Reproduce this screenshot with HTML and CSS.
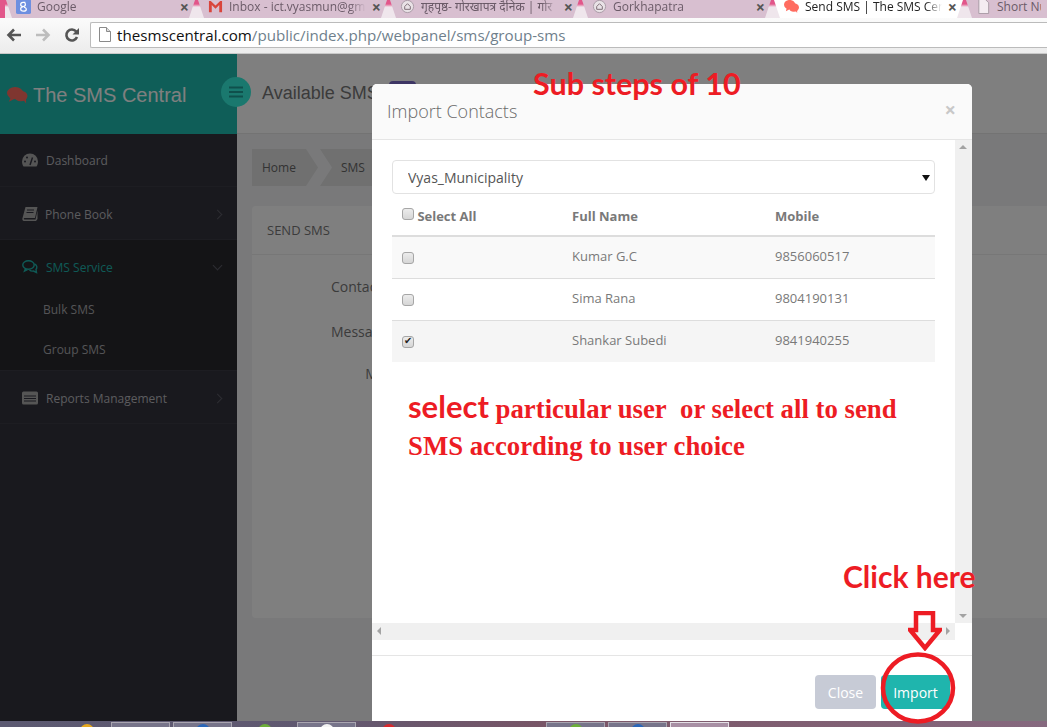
FILE: index.html
```html
<!DOCTYPE html>
<html lang="en">
<head>
    <meta charset="UTF-8">
    <title>Send SMS | The SMS Central</title>
    <link rel="stylesheet" href="styles.css">
</head>
<body>
    <!-- Browser tabs -->
    <div class="tab-strip">
        <div class="tab">
            <svg class="fav" viewBox="0 0 16 16"><rect width="16" height="16" rx="2" fill="#6d8fe0"/><path d="M10 3.500H7.500C6 3.500 5 4.600 5 5.800S6 8 7.500 8 10 7 10 5.800 9 3.500 9 3.500M7.500 8.500C6 8.500 5 9.600 5 10.700S6.200 13 8 13 11 11.900 11 10.800 9.500 9.300 8.500 8.500" fill="none" stroke="#fff" stroke-width="1.300"/></svg>
            <span class="tab-title">Google</span><span class="tab-x">×</span>
        </div>
        <div class="tab">
            <svg class="fav" viewBox="0 0 16 16"><path d="M1 14V2h2l5 5 5-5h2v12h-3V6.500L8 10.500 4 6.500V14z" fill="#d9453c"/></svg>
            <span class="tab-title">Inbox - ict.vyasmun@gma</span><span class="tab-x">×</span>
        </div>
        <div class="tab">
            <svg class="fav" viewBox="0 0 16 16"><circle cx="8" cy="8" r="6.500" fill="#e9e2e6" stroke="#a89aa4"/><path d="M5 11V8l3-3 3 3v3z" fill="none" stroke="#7a6a72"/></svg>
            <span class="tab-title">गृहपृष्ठ- गोरखापत्र दैनिक | गोर</span><span class="tab-x">×</span>
        </div>
        <div class="tab">
            <svg class="fav" viewBox="0 0 16 16"><circle cx="8" cy="8" r="6.500" fill="#e9e2e6" stroke="#a89aa4"/><path d="M5 11V8l3-3 3 3v3z" fill="none" stroke="#7a6a72"/></svg>
            <span class="tab-title">Gorkhapatra</span><span class="tab-x">×</span>
        </div>
        <div class="tab tab-active">
            <svg class="fav" viewBox="0 0 16 16"><ellipse cx="6" cy="6" rx="6" ry="5" fill="#ff6c60"/><ellipse cx="10.500" cy="9" rx="5.500" ry="4.500" fill="#ff6c60"/><path d="M3 9l-1 4 4-2zM12 12l2 3v-4z" fill="#ff6c60"/></svg>
            <span class="tab-title">Send SMS | The SMS Cent</span><span class="tab-x">×</span>
        </div>
        <div class="tab tab-last">
            <svg class="fav" viewBox="0 0 16 16"><path d="M3 .5h7l3.500 3.500v11.500H3z" fill="#f4ecf1" stroke="#a89aa4"/></svg>
            <span class="tab-title">Short Nu</span>
        </div>
    </div>

    <!-- Browser toolbar -->
    <div class="toolbar">
        <svg class="nav-icon" viewBox="0 0 18 18"><path d="M16 9H4M9 3.500 3.500 9 9 14.500" fill="none" stroke="#555" stroke-width="2.600"/></svg>
        <svg class="nav-icon" viewBox="0 0 18 18"><path d="M2 9h12M9 3.500 14.500 9 9 14.500" fill="none" stroke="#bdbdbd" stroke-width="2.600"/></svg>
        <svg class="nav-icon" viewBox="0 0 18 18"><path d="M14 11a5.500 5.500 0 1 1-.8-5.500" fill="none" stroke="#555" stroke-width="2.600"/><path d="M16 2v6.500H9.500z" fill="#555"/></svg>
        <div class="omnibox">
            <svg class="page-icon" viewBox="0 0 12 15"><path d="M.5.500h7l4 4v10H.5z" fill="#fff" stroke="#8a8a8a"/><path d="M7.500.500v4h4" fill="#ddd" stroke="#8a8a8a"/></svg>
            <span class="url-host">thesmscentral.com</span><span class="url-path">/public/index.php/webpanel/sms/group-sms</span>
        </div>
    </div>

    <!-- The page itself -->
    <div class="app">
        <aside class="sidebar">
            <div class="brand">
                <svg class="brand-icon" viewBox="0 0 22 18"><ellipse cx="8.500" cy="7" rx="8.500" ry="6.500" fill="#ff6c60"/><ellipse cx="14.500" cy="10" rx="7" ry="5.500" fill="#ff6c60"/><path d="M4 11l-2 5 6-3zM17 14l3 4v-6z" fill="#ff6c60"/></svg>
                <span>The SMS Central</span>
            </div>
            <nav>
                <div class="menu-item">
                    <svg class="menu-icon" viewBox="0 0 16 13"><path d="M8 0a8 8 0 0 0-8 8c0 2 .6 3.600 1.500 5h13c.9-1.400 1.500-3 1.500-5a8 8 0 0 0-8-8z" fill="#aaa"/><path d="M8 11.500 10.500 4" stroke="#323240" stroke-width="1.400"/><circle cx="3" cy="8" r="1" fill="#323240"/><circle cx="5" cy="4" r="1" fill="#323240"/><circle cx="13" cy="8" r="1" fill="#323240"/></svg>
                    <span class="menu-label">Dashboard</span>
                </div>
                <div class="menu-item">
                    <svg class="menu-icon" viewBox="0 0 16 14"><path d="M3.500 0H15.500L13 11H2.500C1.500 11 1.500 12.500 2.500 12.500H13.500L15.500 3.500V12L14 14H2C.5 14 0 12.500 .5 11z" fill="#aaa"/><path d="M5 3h7M4.500 5.500h7" stroke="#323240"/></svg>
                    <span class="menu-label menu-label-tight">Phone Book</span>
                    <i class="chev"></i>
                </div>
                <div class="menu-group">
                    <div class="menu-item menu-active">
                        <svg class="menu-icon" viewBox="0 0 16 14"><ellipse cx="6.500" cy="5" rx="5.700" ry="4.200" fill="none" stroke="#1fb5ad" stroke-width="1.400"/><path d="M3.500 8.500 2.500 11l3-1.500M12.500 4c2.500 1 3 3.500 1.500 5.500l.5 3-3-1.500c-1.500.3-3 0-4-1" fill="none" stroke="#1fb5ad" stroke-width="1.400"/></svg>
                        <span class="menu-label">SMS Service</span>
                        <i class="chev chev-down"></i>
                    </div>
                    <div class="sub-item">Bulk SMS</div>
                    <div class="sub-item">Group SMS</div>
                </div>
                <div class="menu-item">
                    <svg class="menu-icon" viewBox="0 0 16 13"><rect width="16" height="13" rx="1.500" fill="#aaa"/><path d="M2 4.500h12M2 7h12M2 9.500h12" stroke="#323240"/></svg>
                    <span class="menu-label">Reports Management</span>
                    <i class="chev"></i>
                </div>
            </nav>
        </aside>

        <main class="main">
            <header class="topbar">
                <span class="topbar-title">Available SMS</span>
                <span class="sms-badge">10</span>
            </header>
            <div class="content">
                <div class="crumbs">
                    <span class="crumb crumb-first">Home</span>
                    <span class="crumb crumb-next">SMS</span>
                </div>
                <section class="card">
                    <div class="card-title">SEND SMS</div>
                    <div class="form-row form-row-1"><label>Contacts</label></div>
                    <div class="form-row form-row-2"><label>Message</label></div>
                    <div class="form-row form-row-3"><label>Msg</label></div>
                </section>
            </div>
        </main>

        <button class="nav-toggle">
            <svg viewBox="0 0 14 12"><path d="M0 1.500h14M0 6h14M0 10.500h14" stroke="#1fa098" stroke-width="2"/></svg>
        </button>

        <div class="backdrop"></div>

        <!-- Import contacts dialog -->
        <div class="modal">
            <div class="modal-head">
                <h4>Import Contacts</h4>
                <span class="modal-close">×</span>
            </div>
            <div class="modal-scroll">
                <div class="modal-view">
                    <div class="modal-body">
                        <div class="select-wrap">
                            <select class="group-select">
                                <option>Vyas_Municipality</option>
                            </select>
                        </div>
                        <table class="contacts">
                            <thead>
                                <tr>
                                    <th class="col-check"><input type="checkbox" class="chk chk-head"> Select All</th>
                                    <th class="col-name">Full Name</th>
                                    <th>Mobile</th>
                                </tr>
                            </thead>
                            <tbody>
                                <tr class="row-odd">
                                    <td><input type="checkbox" class="chk"></td>
                                    <td>Kumar G.C</td>
                                    <td>9856060517</td>
                                </tr>
                                <tr>
                                    <td><input type="checkbox" class="chk"></td>
                                    <td>Sima Rana</td>
                                    <td>9804190131</td>
                                </tr>
                                <tr class="row-picked">
                                    <td><input type="checkbox" class="chk" checked></td>
                                    <td>Shankar Subedi</td>
                                    <td>9841940255</td>
                                </tr>
                            </tbody>
                        </table>
                        <p class="note"><span class="note-lead">select</span> particular user&nbsp; or select all to send<br>SMS according to user choice</p>
                    </div>
                    <div class="vbar"><i class="arrow arrow-up"></i><i class="arrow arrow-down"></i></div>
                </div>
                <div class="hbar"><i class="arrow arrow-left"></i><i class="arrow arrow-right"></i></div>
            </div>
            <div class="modal-foot">
                <button class="btn btn-close">Close</button>
                <button class="btn btn-import">Import</button>
            </div>
        </div>

        <!-- Red marks drawn over the screenshot -->
        <div class="mark mark-steps">Sub steps of 10</div>
        <div class="mark mark-click">Click here</div>
        <svg class="mark mark-arrow" viewBox="0 0 34 40"><path d="M8 2h17v17h7L17 37 2 19h6z" fill="none" stroke="#ed1c24" stroke-width="4.500"/></svg>
        <svg class="mark mark-ring" viewBox="0 0 76 72"><ellipse cx="38" cy="36" rx="35" ry="33.500" fill="none" stroke="#ed1c24" stroke-width="4.500"/></svg>
    </div>

    <!-- Windows taskbar -->
    <div class="taskbar">
        <span class="task task-bare"><i class="peek peek-orange"></i></span>
        <span class="task"><i class="peek peek-none"></i></span>
        <span class="task"><i class="peek peek-blue"></i></span>
        <span class="task task-bare"><i class="peek peek-green"></i></span>
        <span class="task"><i class="peek peek-white"></i></span>
        <span class="task task-bare"><i class="peek peek-red"></i></span>
        <span class="task task-gap"><i class="peek peek-green"></i></span>
        <span class="task"><i class="peek peek-blue"></i></span>
        <span class="task task-current"><i class="peek peek-none"></i></span>
    </div>
</body>
</html>
```

FILE: styles.css
```css
html, body {
    margin: 0;
    padding: 0;
    height: 727px;
    overflow: hidden;
}

body {
    display: flex;
    flex-direction: column;
    font-family: "Open Sans", sans-serif;
    background-color: #fff;
}

/* Browser tabs */
.tab-strip {
    display: flex;
    height: 18px;
    flex-shrink: 0;
    padding-left: 6px;
    overflow: hidden;
    background:
        linear-gradient(90deg, #e2568a 0, #e2568a 5px, transparent 5px),
        linear-gradient(#e2568a 0, #e2568a 4px, #efe6ec 7px);
}

.tab {
    display: flex;
    align-items: center;
    width: 189px;
    margin-right: 3px;
    padding: 0 6px 5px 10px;
    box-sizing: border-box;
    flex-shrink: 0;
    background-color: #d8bfd0;
    color: #6b5b68;
    font-size: 12px;
    clip-path: polygon(0 0, 100% 0, calc(100% - 6px) 100%, 6px 100%);
}

.tab-active {
    background-color: #fff;
    color: #222;
}

.tab-last {
    width: 81px;
    margin-right: 0;
    clip-path: polygon(0 0, 100% 0, 100% 100%, 6px 100%);
}

.fav {
    width: 15px;
    height: 15px;
    margin-right: 6px;
    flex-shrink: 0;
}

.tab-title {
    flex: 1;
    overflow: hidden;
    white-space: nowrap;
    font-family: "Open Sans", "Noto Sans", sans-serif;
    mask-image: linear-gradient(90deg, #000 88%, transparent);
}

.tab-last .tab-title {
    mask-image: none;
}

.tab-x {
    margin-left: 6px;
    color: #555;
    font-size: 16px;
    font-weight: 700;
    line-height: 14px;
}

/* Browser toolbar */
.toolbar {
    display: flex;
    align-items: center;
    height: 36px;
    flex-shrink: 0;
    box-sizing: border-box;
    padding: 0 0 2px 5px;
    background: linear-gradient(#fbfbfb, #ececec);
    border-bottom: 1px solid #c8c8c8;
}

.nav-icon {
    width: 18px;
    height: 18px;
    margin-right: 11px;
    flex-shrink: 0;
}

.omnibox {
    display: flex;
    align-items: center;
    flex: 1;
    height: 26px;
    box-sizing: border-box;
    margin-left: -2px;
    padding-left: 8px;
    border: 1px solid #bbb;
    border-right: none;
    border-radius: 2px 0 0 2px;
    background-color: #fff;
    font-size: 15.15px;
    white-space: nowrap;
}

.page-icon {
    width: 12px;
    height: 15px;
    margin-right: 6px;
}

.url-host {
    color: #111;
}

.url-path {
    color: #6f7f8c;
}

/* Page */
.app {
    position: relative;
    display: flex;
    flex: 1;
    min-height: 0;
    background-color: #f2f3f5;
}

.sidebar {
    width: 237px;
    flex-shrink: 0;
    background-color: #32323c;
}

.brand {
    display: flex;
    align-items: center;
    height: 80px;
    padding-left: 7px;
    padding-top: 2px;
    box-sizing: border-box;
    background-color: #1fbcb0;
    color: #fff;
    font-family: "Liberation Sans", sans-serif;
    font-size: 20px;
}

.brand-icon {
    width: 21px;
    height: 18px;
    margin-right: 5px;
}

.menu-item {
    display: flex;
    align-items: center;
    height: 53px;
    padding: 2px 14px 0 22px;
    box-sizing: border-box;
    border-bottom: 1px solid #3a3a44;
    color: #b8b8bc;
    font-size: 12px;
}

nav > .menu-item:first-child {
    padding-top: 0;
}

.menu-icon {
    width: 16px;
    height: 14px;
    margin-right: 8px;
    flex-shrink: 0;
}

.menu-label {
    flex: 1;
}

.menu-label-tight {
    margin-left: -1px;
}

.menu-active {
    padding-top: 1px;
    color: #1fb5ad;
    border-bottom: none;
}

.menu-group {
    height: 131px;
    box-sizing: border-box;
    border-bottom: 1px solid #3a3a44;
    background-color: #28282c;
}

.sub-item {
    height: 40px;
    line-height: 34px;
    padding-left: 43px;
    color: #a8a8ac;
    font-size: 12px;
}

.chev {
    width: 6px;
    height: 6px;
    margin-right: 2px;
    border-top: 1px solid #5a5a64;
    border-right: 1px solid #5a5a64;
    transform: rotate(45deg);
}

.chev-down {
    margin-top: -4px;
    transform: rotate(135deg);
}

.main {
    flex: 1;
    min-width: 0;
}

.topbar {
    display: flex;
    align-items: center;
    height: 80px;
    padding-left: 25px;
    box-sizing: border-box;
    background-color: #fff;
    border-bottom: 1px solid #e6e6e6;
}

.topbar-title {
    color: #777;
    font-family: "Liberation Sans", sans-serif;
    font-size: 18px;
}

.sms-badge {
    margin-left: 10px;
    margin-top: 4px;
    padding: 3px 7px;
    width: 13px;
    height: 24px;
    border-radius: 4px;
    background-color: #7a6ac8;
    color: #fff;
    font-size: 14px;
}

.content {
    padding: 15px 0 0 15px;
}

.crumbs {
    display: flex;
    height: 37px;
}

.crumb {
    display: flex;
    align-items: center;
    background-color: #e0e0e0;
    color: #666;
    font-size: 12px;
}

.crumb-first {
    width: 66px;
    padding-left: 10px;
    box-sizing: border-box;
    clip-path: polygon(0 0, 54px 0, 100% 50%, 54px 100%, 0 100%);
}

.crumb-next {
    width: 90px;
    margin-left: 2px;
    padding-left: 21px;
    box-sizing: border-box;
    clip-path: polygon(0 0, 100% 0, 100% 100%, 0 100%, 12px 50%);
}

.card {
    height: 412px;
    margin-top: 20px;
    border-radius: 4px 0 0 4px;
    background-color: #fff;
}

.card-title {
    height: 48px;
    line-height: 48px;
    padding-left: 15px;
    border-bottom: 1px solid #eee;
    color: #777;
    font-size: 13px;
}

.form-row {
    width: 136px;
    text-align: right;
    color: #777;
    font-size: 14px;
}

.form-row-1 {
    margin-top: 22px;
}

.form-row-2 {
    margin-top: 26px;
}

.form-row-3 {
    width: 140px;
    margin-top: 23px;
}

.nav-toggle {
    position: absolute;
    left: 221px;
    top: 23px;
    width: 30px;
    height: 30px;
    padding: 0 8px;
    border: none;
    border-radius: 50%;
    background-color: #35f0dc;
}

.nav-toggle svg {
    display: block;
}

.backdrop {
    position: absolute;
    inset: 0;
    background-color: rgba(0, 0, 0, 0.5);
}

/* Import dialog */
.modal {
    position: absolute;
    left: 372px;
    top: 30px;
    bottom: 0;
    width: 600px;
    display: flex;
    flex-direction: column;
    border-radius: 5px 5px 0 0;
    background-color: #fff;
}

.modal-head {
    display: flex;
    align-items: center;
    justify-content: space-between;
    height: 56px;
    flex-shrink: 0;
    box-sizing: border-box;
    padding: 0 16px 2px 15px;
    border-bottom: 1px solid #e5e5e5;
    border-radius: 5px 5px 0 0;
    background-color: #fafafa;
}

.modal-head h4 {
    margin: 0;
    color: #6a6a6a;
    font-size: 18px;
    font-weight: 300;
}

.modal-close {
    margin-top: -2px;
    color: #c8c8c8;
    font-size: 20px;
    font-weight: 700;
}

.modal-scroll {
    flex: 1;
    min-height: 0;
    display: flex;
    flex-direction: column;
}

.modal-view {
    display: flex;
    height: 483px;
}

.modal-body {
    flex: 1;
    padding: 20px 20px 0;
    min-width: 0;
}

.vbar {
    position: relative;
    width: 17px;
    background-color: #f0f0f0;
}

.hbar {
    position: relative;
    width: 583px;
    height: 17px;
    background-color: #f0f0f0;
}

.arrow {
    position: absolute;
    width: 0;
    height: 0;
    border: 4px solid transparent;
}

.arrow-up {
    top: 5px;
    left: 4px;
    border-top: none;
    border-bottom-color: #a3a3a3;
}

.arrow-down {
    bottom: 5px;
    left: 4px;
    border-bottom: none;
    border-top-color: #a3a3a3;
}

.arrow-left {
    left: 5px;
    top: 4px;
    border-left: none;
    border-right-color: #a3a3a3;
}

.arrow-right {
    right: 5px;
    top: 4px;
    border-right: none;
    border-left-color: #a3a3a3;
}

.select-wrap {
    position: relative;
}

.select-wrap::after {
    content: "";
    position: absolute;
    right: 5px;
    top: 15px;
    border: 4px solid transparent;
    border-bottom: none;
    border-top: 6px solid #111;
}

.group-select {
    display: block;
    width: 100%;
    height: 34px;
    padding: 0 15px;
    box-sizing: border-box;
    appearance: none;
    border: 1px solid #e2e2e2;
    border-radius: 4px;
    background-color: #fff;
    color: #555;
    font-family: "Open Sans", sans-serif;
    font-size: 14px;
}

.contacts {
    width: 100%;
    border-collapse: collapse;
    table-layout: fixed;
    font-size: 13px;
    color: #797979;
}

.contacts th {
    height: 42px;
    padding: 2px 10px 0;
    box-sizing: border-box;
    border-bottom: 2px solid #ddd;
    text-align: left;
}

.col-check {
    width: 170px;
}

.col-name {
    width: 203px;
}

.contacts td {
    height: 42px;
    padding: 0 10px 2px;
    box-sizing: border-box;
    border-bottom: 1px solid #ddd;
}

.contacts tr:last-child td {
    border-bottom: none;
}

.row-odd {
    background-color: #f9f9f9;
}

.row-picked {
    background-color: #f5f5f5;
}

.chk {
    appearance: none;
    position: relative;
    display: inline-block;
    width: 12px;
    height: 12px;
    margin: 0;
    vertical-align: middle;
    border: 1px solid #a6a6a6;
    border-radius: 3px;
    background: linear-gradient(#ececec, #d6d6d6);
}

.chk-head {
    vertical-align: 1px;
}

.chk:checked::after {
    content: "✔";
    position: absolute;
    left: 1px;
    top: -2px;
    color: #222;
    font-family: "DejaVu Sans", sans-serif;
    font-size: 10px;
}

.note {
    margin: 26px 0 0 16px;
    color: #ed1c24;
    font-family: "Liberation Serif", serif;
    font-size: 26.75px;
    font-weight: 700;
    line-height: 37px;
}

.note-lead {
    font-family: "Lato", sans-serif;
    font-size: 31px;
}

.modal-foot {
    display: flex;
    justify-content: flex-end;
    gap: 5px;
    height: 66px;
    flex-shrink: 0;
    box-sizing: border-box;
    padding: 19px 22px 0 0;
    border-top: 1px solid #e5e5e5;
}

.btn {
    height: 34px;
    border: none;
    border-radius: 4px;
    color: #fff;
    font-family: "Open Sans", sans-serif;
    font-size: 14px;
}

.btn-close {
    width: 61px;
    background-color: #c7cbd6;
}

.btn-import {
    width: 69px;
    background-color: #1fb5ad;
}

/* Red annotations */
.mark {
    position: absolute;
    color: #ed1c24;
    font-family: "Lato", sans-serif;
    font-weight: 700;
    white-space: nowrap;
}

.mark-steps {
    left: 533px;
    top: 11px;
    font-size: 30.5px;
}

.mark-click {
    left: 843px;
    top: 504px;
    font-size: 30px;
}

.mark-arrow {
    left: 908px;
    top: 557px;
    width: 34px;
    height: 40px;
}

.mark-ring {
    left: 880px;
    top: 598px;
    width: 76px;
    height: 72px;
}

/* Windows taskbar */
.taskbar {
    display: flex;
    height: 6px;
    flex-shrink: 0;
    padding-left: 49px;
    overflow: hidden;
    background: linear-gradient(90deg, #5c5a72, #605870 320px, #7a5566 560px, #86697f);
}

.task {
    display: flex;
    justify-content: center;
    width: 59px;
    margin: 1px 3px 0 0;
    box-sizing: border-box;
    border: 1px solid #a9a5b0;
    border-bottom: none;
    background-color: #77748a;
}

.task-bare {
    border-color: transparent;
    background-color: transparent;
}

.task-gap {
    margin-left: 125px;
}

.task-current {
    border-color: #e4e0e6;
    background-color: #a88fa4;
}

.peek {
    width: 14px;
    height: 10px;
    margin-top: 1px;
    border-radius: 7px 7px 0 0;
}

.peek-orange {
    margin-left: 16px;
    background-color: #e6a81e;
}

.peek-blue {
    background-color: #2a66b8;
}

.peek-green {
    background-color: #6cae3a;
}

.peek-white {
    background-color: #f4f4f4;
}

.peek-red {
    background-color: #d8282c;
}

.peek-none {
    background-color: transparent;
}
```
